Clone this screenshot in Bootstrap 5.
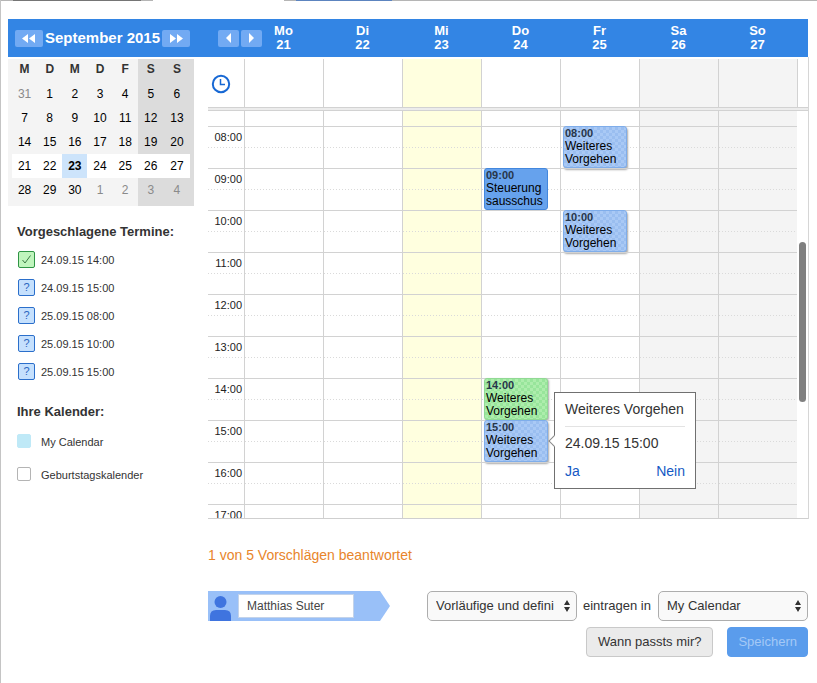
<!DOCTYPE html>
<html lang="de">
<head>
<meta charset="utf-8">
<meta name="viewport" content="width=device-width, initial-scale=1">
<title>Terminvorschläge</title>
<link rel="stylesheet" href="https://cdn.jsdelivr.net/npm/bootstrap@5.3.0/dist/css/bootstrap.min.css">
<style>
body{font-family:"Liberation Sans",Arial,sans-serif;font-size:13px;line-height:16px;color:#333;background:#fff;border-left:1px solid #c4c4c4;min-height:100vh}
.top-strip{height:1px;margin-left:-1px}
.seg-gray{background:#b5b5b5}.seg-dark{background:#757575}.seg-blue{background:#5c84bf}
.seg-a{width:13px}.seg-b{width:128px}.seg-c{width:12px}.seg-gap{width:131px}.seg-d{width:96px}
.page{padding:18px 8px 26px 7px}
.bar{background:#3385e4;color:#fff;height:38px;margin-right:1px;font-weight:bold}
.bar-month{width:200px;padding:0 18px 0 7px}
.bar-month .title{font-size:15px}
.nav-btn{border:0;background:#72aaf3;height:17px;width:28px;border-radius:2px;padding:0;display:flex;align-items:center;justify-content:center}
.nav-btn.single{width:21px}
.bar-week{width:36px;padding-left:10px;gap:2px}
.day-head{font-size:13px;line-height:14px}
.bar-end{width:11px}
.side{width:186px;margin-right:14px}
.mini{background:linear-gradient(to right,#f4f4f4 130px,#dcdcdc 130px);margin-top:2px;padding:0 4px 4px;font-size:12px}
.mini table{table-layout:fixed;width:100%;color:#000}
.mini th,.mini td{text-align:center;height:24px;padding:0;line-height:16px}
.mini th{height:23px;width:25px;padding-bottom:3px;color:#333}
.mini th:nth-child(n+6){width:26px}
.mini .other{color:#8a8a8a}
.mini .current td{background:#fff}
.mini .current .today{background:#cde4fb;font-weight:bold}
.side h2{font-size:13px;line-height:16px;font-weight:bold;margin:0}
.side-block{padding:18px 0 0 9px}
.proposals{margin:11px 0 13px;font-size:11px;line-height:18px}
.proposals li{height:28px;gap:6px;padding-left:1px}
.status{width:17px;height:17px;border:1px solid #2b6fcb;border-radius:2px;background:#c5e0fd;color:#2b66c0;line-height:15px}
.status.yes{border-color:#2f9445;background:#c0f5bd;color:#3c7a46}
.cal-list{margin-top:14px;font-size:11px}
.cal-list li{height:33px;gap:10px}
.cal-box{appearance:none;width:14px;height:14px;border:1px solid #b4b4b4;border-radius:2px;background:#fff;margin:0}
.cal-box:checked{background:#bfe9f7;border-color:#bfe9f7}
.sched{border-right:1px solid #d6d6d6}
.allday{height:50px;padding-top:2px}
.clock{width:36px;padding:2px 0 0 3px}
.allday-cell{border-left:1px solid #d2d2d2}
.is-today{background:#ffffdf}
.is-weekend{background:#f4f4f4}
.allday-end{width:11px;border-left:1px solid #d2d2d2}
.divider{height:4px;background:#ececec;border-top:1px solid #d2d2d2;border-bottom:1px solid #d2d2d2}
.scroll-area{height:408px;overflow:hidden;border-bottom:1px solid #cfcfcf}
.rail{width:11px;padding:131px 0 0 2px}
.thumb{width:7px;height:160px;border-radius:4px;background:#808080}
.hours{table-layout:fixed;border-collapse:separate;border-spacing:0;width:100%}
.hours th{width:36px;font-weight:normal;font-size:11px;line-height:13px;text-align:right;vertical-align:top;padding:4px 2px 0 0;color:#222}
.hours tr>*{height:42px;border-top:1px solid #d2d2d2;background-image:repeating-linear-gradient(to right,#dadada 0 1px,transparent 1px 3px);background-size:100% 1px;background-position:0 20px;background-repeat:no-repeat}
.hours tr.partial>*{height:15px;border-top:0;background-image:none}
.hours td{border-left:1px solid #d2d2d2;position:relative;padding:0}
.hours td:nth-child(4){background-color:#ffffdf}
.hours td:nth-child(n+7){background-color:#f4f4f4}
.event{position:absolute;top:-1px;left:2px;right:12px;height:42px;border:1px solid #7fadea;border-radius:3px;padding-left:1px;font-size:12px;line-height:13px;color:#000;background-color:#a7c7f4;background-image:repeating-conic-gradient(#9abef0 0 25%,#a9c9f5 0 50%);background-size:6px 6px;box-shadow:1px 2px 2px #aaa}
.event b{display:block;font-size:11px;color:#27364a}
.event.fixed{background:#66a2ed;border-color:#4387dd;box-shadow:none}
.event.accepted{background-color:#a5eaa5;background-image:repeating-conic-gradient(#98e59b 0 25%,#adedac 0 50%);border-color:#91d994;box-shadow:1px 1px 2px #aaa}
.tip{position:absolute;z-index:5;top:-29px;left:72px;width:142px;border:1px solid #707070;background:#fff;padding:8px 10px 9px;font-size:14px;line-height:16px;color:#333}
.tip::before{content:"";position:absolute;left:-5px;top:44px;width:8px;height:8px;background:#fff;border:solid #8a8a8a;border-width:0 0 1px 1px;transform:rotate(45deg)}
.tip-title{padding-bottom:9px;border-bottom:1px solid #e3e3e3;margin-bottom:8px;white-space:nowrap}
.tip a{color:#1459c4;text-decoration:none}
.tip-links{margin-top:12px}
.answered{color:#e8852b;font-size:14px;margin:28px 0 28px;line-height:16px}
.reply{margin-right:1px}
.person{height:30px;width:182px;background:#99c0f8;clip-path:polygon(0 0,172px 0,100% 50%,172px 100%,0 100%);gap:6px;padding-left:2px}
.person input{width:116px;height:24px;border:1px solid #c3d3ea;background:#fff;padding:0 8px;font-size:12px;color:#444}
.controls{width:381px;gap:6px}
.pick{height:30px;width:150px;border:1px solid #adadad;border-radius:5px;background:#f9f9f9 url("data:image/svg+xml,%3Csvg xmlns='http://www.w3.org/2000/svg' viewBox='0 0 6 12'%3E%3Cpath d='M3 0L6 5H0zM3 12L0 7H6z' fill='%23333'/%3E%3C/svg%3E") no-repeat right 6px center/6px 12px;padding:0 14px 0 8px;font-size:13px;line-height:16px;color:#333}
.act{height:30px;border-radius:4px;font-size:13px;line-height:16px;padding:0 10px}
.act-plain{background:#ebebeb;border-color:#c9c9c9;color:#333;padding:0 11px}
.act-save,.act-save:disabled{background:#5a9cec;border-color:#5a9cec;color:#a4c9f6;opacity:1}
</style>
<script src="https://cdn.jsdelivr.net/npm/bootstrap@5.3.0/dist/js/bootstrap.bundle.min.js"></script>
</head>
<body>
<div class="top-strip d-flex">
  <div class="seg-gray seg-a"></div><div class="seg-dark seg-b"></div><div class="seg-gray seg-c"></div><div class="seg-gap"></div><div class="seg-gray seg-c"></div><div class="seg-blue seg-d"></div><div class="seg-gray flex-grow-1"></div>
</div>
<main class="page">
  <header class="bar d-flex align-items-center">
    <div class="bar-month d-flex align-items-center justify-content-between flex-shrink-0">
      <button type="button" class="nav-btn" aria-label="Voriger Monat"><svg width="14" height="9" viewBox="0 0 14 9" fill="#fff"><path d="M6 0v9L0 4.500zM13 0v9L7 4.500z"/></svg></button>
      <span class="title text-nowrap">September 2015</span>
      <button type="button" class="nav-btn" aria-label="Nächster Monat"><svg width="14" height="9" viewBox="0 0 14 9" fill="#fff"><path d="M1 0v9l6-4.500zM8 0v9l6-4.500z"/></svg></button>
    </div>
    <div class="bar-week d-flex flex-shrink-0">
      <button type="button" class="nav-btn single flex-shrink-0" aria-label="Vorige Woche"><svg width="5" height="10" viewBox="0 0 5 10" fill="#fff"><path d="M5 0v10L0 5z"/></svg></button>
      <button type="button" class="nav-btn single flex-shrink-0" aria-label="Nächste Woche"><svg width="5" height="10" viewBox="0 0 5 10" fill="#fff"><path d="M0 0v10l5-5z"/></svg></button>
    </div>
    <div class="d-flex flex-grow-1 text-center">
      <div class="day-head w-100">Mo<br>21</div><div class="day-head w-100">Di<br>22</div><div class="day-head w-100">Mi<br>23</div><div class="day-head w-100">Do<br>24</div><div class="day-head w-100">Fr<br>25</div><div class="day-head w-100">Sa<br>26</div><div class="day-head w-100">So<br>27</div>
    </div>
    <div class="bar-end flex-shrink-0"></div>
  </header>

  <div class="d-flex">
    <aside class="side flex-shrink-0">
      <div class="mini">
        <table>
          <thead><tr><th>M</th><th>D</th><th>M</th><th>D</th><th>F</th><th>S</th><th>S</th></tr></thead>
          <tbody>
            <tr><td class="other">31</td><td>1</td><td>2</td><td>3</td><td>4</td><td>5</td><td>6</td></tr>
            <tr><td>7</td><td>8</td><td>9</td><td>10</td><td>11</td><td>12</td><td>13</td></tr>
            <tr><td>14</td><td>15</td><td>16</td><td>17</td><td>18</td><td>19</td><td>20</td></tr>
            <tr class="current"><td>21</td><td>22</td><td class="today">23</td><td>24</td><td>25</td><td>26</td><td>27</td></tr>
            <tr><td>28</td><td>29</td><td>30</td><td class="other">1</td><td class="other">2</td><td class="other">3</td><td class="other">4</td></tr>
          </tbody>
        </table>
      </div>
      <section class="side-block">
        <h2 class="text-nowrap">Vorgeschlagene Termine:</h2>
        <ul class="proposals list-unstyled">
          <li class="d-flex"><span class="status yes d-flex align-items-center justify-content-center"><svg width="11" height="11" viewBox="0 0 11 11" fill="none" stroke="currentColor"><path d="M1.500 6l2.500 3L9.500 1.500"/></svg></span><span>24.09.15 14:00</span></li>
          <li class="d-flex"><span class="status text-center">?</span><span>24.09.15 15:00</span></li>
          <li class="d-flex"><span class="status text-center">?</span><span>25.09.15 08:00</span></li>
          <li class="d-flex"><span class="status text-center">?</span><span>25.09.15 10:00</span></li>
          <li class="d-flex"><span class="status text-center">?</span><span>25.09.15 15:00</span></li>
        </ul>
        <h2>Ihre Kalender:</h2>
        <ul class="cal-list list-unstyled mb-0">
          <li class="d-flex"><input class="cal-box" type="checkbox" id="cal-my" checked><label for="cal-my">My Calendar</label></li>
          <li class="d-flex"><input class="cal-box" type="checkbox" id="cal-birth"><label for="cal-birth">Geburtstagskalender</label></li>
        </ul>
      </section>
    </aside>

    <div class="flex-grow-1">
      <section class="sched" aria-label="Wochenkalender">
        <div class="allday d-flex">
          <div class="clock d-flex align-items-center flex-shrink-0"><svg width="20" height="20" viewBox="0 0 20 20" fill="none" stroke="#1768d4" stroke-width="2"><circle cx="10" cy="10" r="8.200"/><path d="M9.500 5v5.500H14" stroke-width="1.500"/></svg></div>
          <div class="allday-cell w-100"></div><div class="allday-cell w-100"></div><div class="allday-cell is-today w-100"></div><div class="allday-cell w-100"></div><div class="allday-cell w-100"></div><div class="allday-cell is-weekend w-100"></div><div class="allday-cell is-weekend w-100"></div>
          <div class="allday-end flex-shrink-0"></div>
        </div>
        <div class="divider"></div>
        <div class="scroll-area d-flex">
          <div class="flex-grow-1">
            <table class="hours">
              <tbody>
                <tr class="partial"><th></th><td></td><td></td><td></td><td></td><td></td><td></td><td></td></tr>
                <tr><th>08:00</th><td></td><td></td><td></td><td></td><td><div class="event"><b>08:00</b>Weiteres Vorgehen</div></td><td></td><td></td></tr>
                <tr><th>09:00</th><td></td><td></td><td></td><td><div class="event fixed"><b>09:00</b>Steuerung<br>sausschus</div></td><td></td><td></td><td></td></tr>
                <tr><th>10:00</th><td></td><td></td><td></td><td></td><td><div class="event"><b>10:00</b>Weiteres Vorgehen</div></td><td></td><td></td></tr>
                <tr><th>11:00</th><td></td><td></td><td></td><td></td><td></td><td></td><td></td></tr>
                <tr><th>12:00</th><td></td><td></td><td></td><td></td><td></td><td></td><td></td></tr>
                <tr><th>13:00</th><td></td><td></td><td></td><td></td><td></td><td></td><td></td></tr>
                <tr><th>14:00</th><td></td><td></td><td></td><td><div class="event accepted"><b>14:00</b>Weiteres Vorgehen</div></td><td></td><td></td><td></td></tr>
                <tr><th>15:00</th><td></td><td></td><td></td><td><div class="event"><b>15:00</b>Weiteres Vorgehen</div>
                  <div class="tip" role="dialog" aria-label="Terminvorschlag">
                    <div class="tip-title">Weiteres Vorgehen</div>
                    <div>24.09.15 15:00</div>
                    <div class="tip-links d-flex justify-content-between"><a href="#">Ja</a><a href="#">Nein</a></div>
                  </div></td><td></td><td></td><td></td></tr>
                <tr><th>16:00</th><td></td><td></td><td></td><td></td><td></td><td></td><td></td></tr>
                <tr><th>17:00</th><td></td><td></td><td></td><td></td><td></td><td></td><td></td></tr>
              </tbody>
            </table>
          </div>
          <div class="rail flex-shrink-0"><div class="thumb"></div></div>
        </div>
      </section>

      <p class="answered">1 von 5 Vorschlägen beantwortet</p>
      <form class="reply d-flex justify-content-between align-items-start">
        <div class="person d-flex align-items-center flex-shrink-0">
          <svg class="align-self-end flex-shrink-0" width="22" height="26" viewBox="0 0 22 26" fill="#3f74df"><circle cx="10.500" cy="7" r="6"/><path d="M0 26v-5q0-6 6-6h9q6 0 6 6v5z"/></svg>
          <input type="text" value="Matthias Suter" aria-label="Teilnehmer">
        </div>
        <div class="controls d-flex flex-wrap align-items-center justify-content-end">
          <select class="pick form-select flex-shrink-0" id="mode" aria-label="Art der Termine"><option>Vorläufige und defini</option></select>
          <label class="flex-grow-1" for="target">eintragen in</label>
          <select class="pick form-select flex-shrink-0" id="target"><option>My Calendar</option></select>
          <button type="button" class="btn act act-plain me-2">Wann passts mir?</button>
          <button type="submit" class="btn act act-save" disabled>Speichern</button>
        </div>
      </form>
    </div>
  </div>
</main>
</body>
</html>
